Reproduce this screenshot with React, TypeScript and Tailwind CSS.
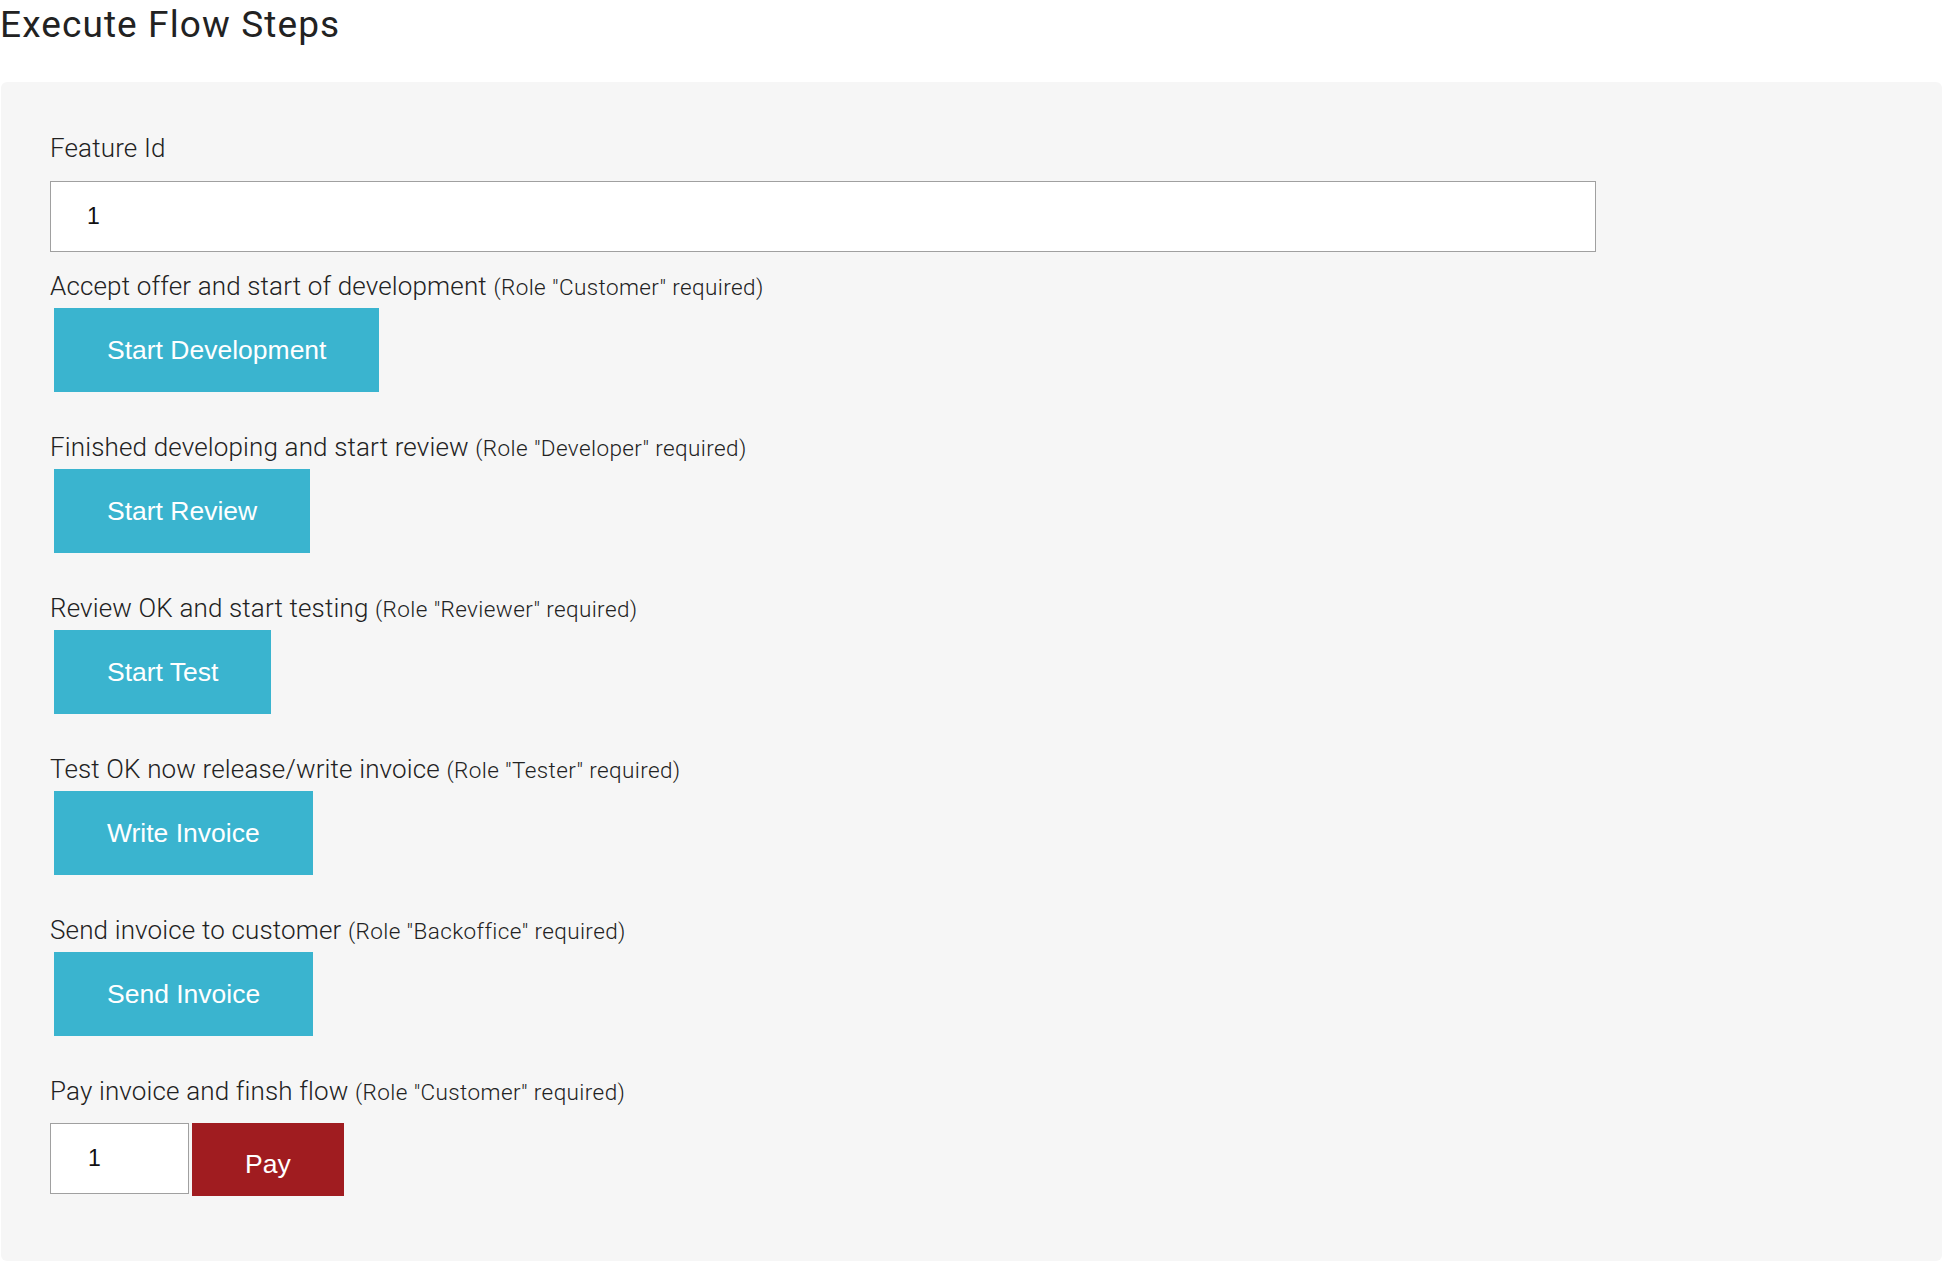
import React from "react";

const steps = [
  { label: "Accept offer and start of development", role: "Customer", button: "Start Development" },
  { label: "Finished developing and start review", role: "Developer", button: "Start Review" },
  { label: "Review OK and start testing", role: "Reviewer", button: "Start Test" },
  { label: "Test OK now release/write invoice", role: "Tester", button: "Write Invoice" },
  { label: "Send invoice to customer", role: "Backoffice", button: "Send Invoice" },
];

function StepLabel({ label, role, className }: { label: string; role: string; className?: string }) {
  return (
    <div className={"h-[30px] text-[26px] leading-[30px] font-light tracking-[0.15px] text-[#222222] whitespace-nowrap " + (className ?? "")}>
      {label} <span className="text-[22.5px] leading-none tracking-[0.4px]">(Role "{role}" required)</span>
    </div>
  );
}

export default function App() {
  return (
    <div className="min-h-[1273px] w-[1950px] bg-white font-['Roboto',sans-serif]">
      <h1 className="pt-[2px] h-[46px] text-[37px] leading-[45px] font-normal tracking-[1.1px] text-[#222222]">Execute Flow Steps</h1>
      <div className="mt-[36px] ml-[1px] w-[1941px] rounded-[6px] bg-[#f6f6f6] pl-[49px] pt-[51px] pb-[65px]">
        <div className="h-[30px] text-[26px] leading-[30px] font-light tracking-[0.15px] text-[#222222]">Feature Id</div>
        <input
          readOnly
          value="1"
          className="mt-[18px] block h-[71px] w-[1546px] border border-[#a0a0a0] bg-white pl-[36px] text-[23px] text-[#111111] font-['Liberation_Sans',Arial,sans-serif] outline-none"
        />
        {steps.map((s, i) => (
          <div key={s.button}>
            <StepLabel label={s.label} role={s.role} className={i === 0 ? "mt-[19px]" : "mt-[40px]"} />
            <button className="mt-[7px] ml-[4px] flex h-[84px] items-center bg-[#3ab4cf] px-[53px] text-[26.5px] leading-[30px] text-white font-['Liberation_Sans',Arial,sans-serif]">
              {s.button}
            </button>
          </div>
        ))}
        <StepLabel label="Pay invoice and finsh flow" role="Customer" className="mt-[40px]" />
        <div className="mt-[17px] flex items-start">
          <input
            readOnly
            value="1"
            className="block h-[71px] w-[139px] border border-[#a0a0a0] bg-white pl-[37px] text-[23px] text-[#111111] font-['Liberation_Sans',Arial,sans-serif] outline-none"
          />
          <button className="ml-[3px] h-[73px] bg-[#a01c20] px-[53px] pt-[26px] pb-[17px] text-[26.5px] leading-[30px] text-white font-['Liberation_Sans',Arial,sans-serif]">
            Pay
          </button>
        </div>
      </div>
    </div>
  );
}
